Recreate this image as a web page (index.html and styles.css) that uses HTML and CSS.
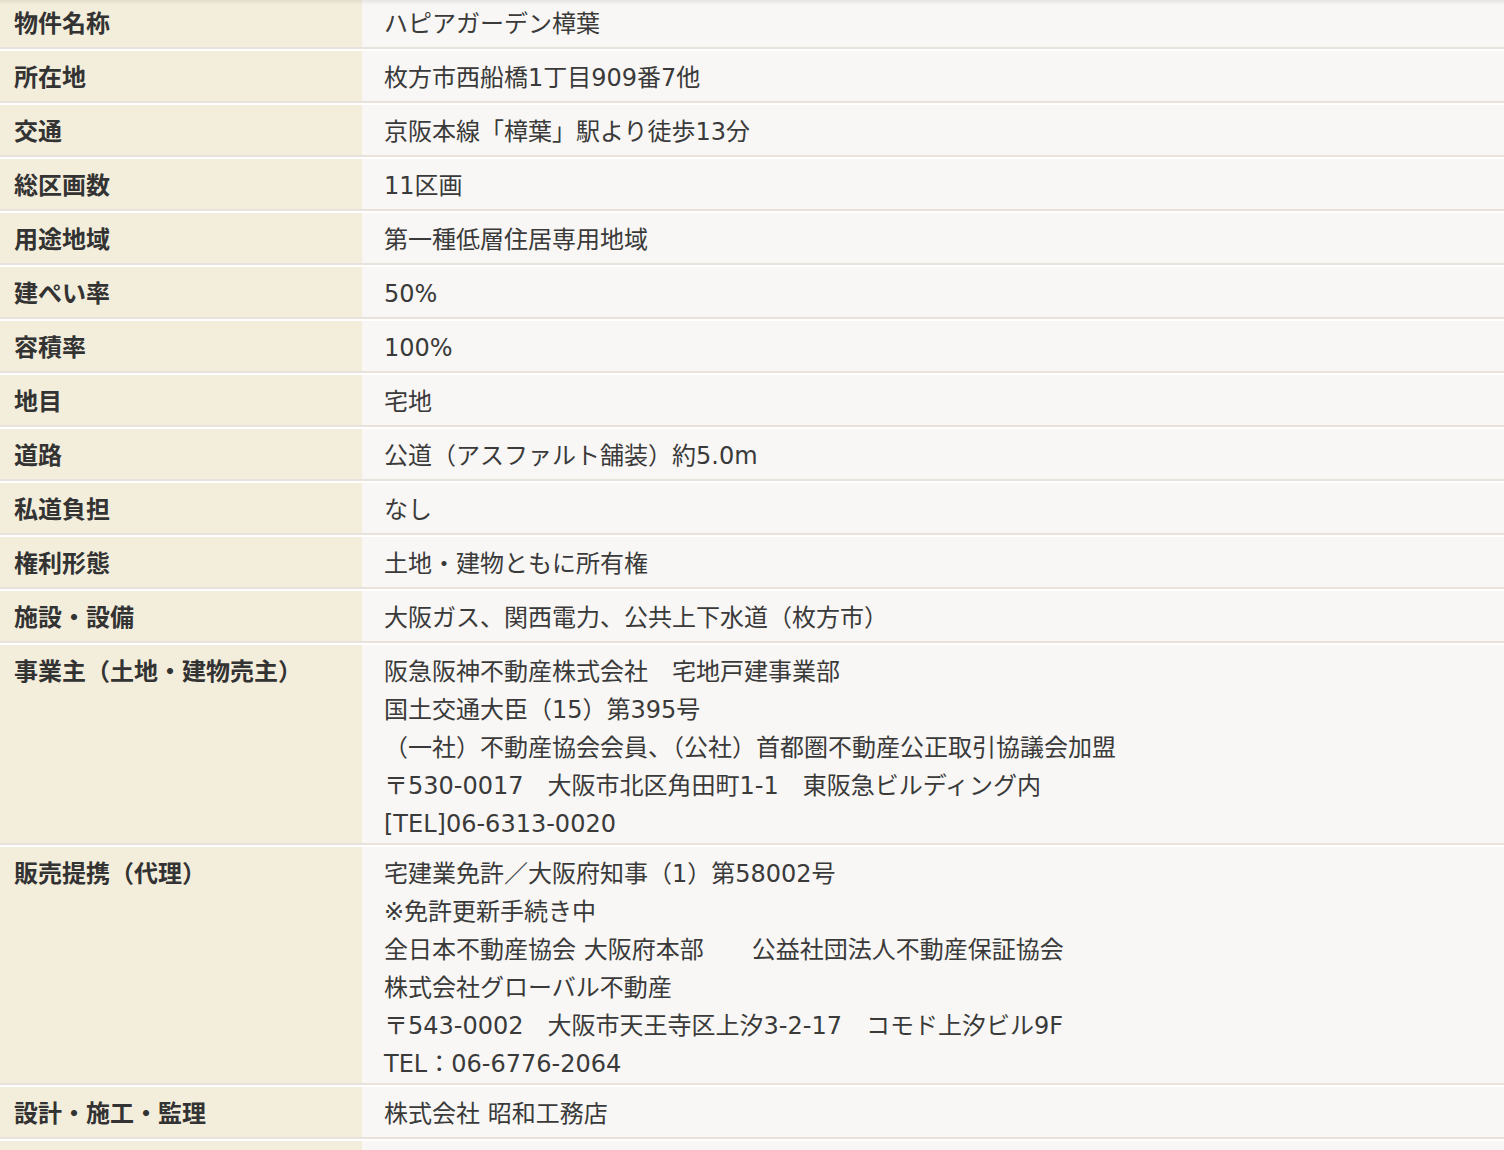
FILE: index.html
```html
<!DOCTYPE html>
<html lang="ja">
<head>
<meta charset="utf-8">
<title>物件概要</title>
<link rel="stylesheet" href="styles.css">
</head>
<body>
<div class="top-shade"></div>
<div class="spec">
  <div class="row"><div class="label">物件名称</div><div class="value">ハピアガーデン樟葉</div></div>
  <div class="row"><div class="label">所在地</div><div class="value">枚方市西船橋1丁目909番7他</div></div>
  <div class="row"><div class="label">交通</div><div class="value">京阪本線「樟葉」駅より徒歩13分</div></div>
  <div class="row"><div class="label">総区画数</div><div class="value">11区画</div></div>
  <div class="row"><div class="label">用途地域</div><div class="value">第一種低層住居専用地域</div></div>
  <div class="row"><div class="label">建ぺい率</div><div class="value">50%</div></div>
  <div class="row"><div class="label">容積率</div><div class="value">100%</div></div>
  <div class="row"><div class="label">地目</div><div class="value">宅地</div></div>
  <div class="row"><div class="label">道路</div><div class="value">公道（アスファルト舗装）約5.0m</div></div>
  <div class="row"><div class="label">私道負担</div><div class="value">なし</div></div>
  <div class="row"><div class="label">権利形態</div><div class="value">土地・建物ともに所有権</div></div>
  <div class="row"><div class="label">施設・設備</div><div class="value">大阪ガス、関西電力、公共上下水道（枚方市）</div></div>
  <div class="row"><div class="label">事業主（土地・建物売主）</div><div class="value multi">阪急阪神不動産株式会社　宅地戸建事業部<br>国土交通大臣（15）第395号<br>（一社）不動産協会会員、（公社）首都圏不動産公正取引協議会加盟<br>〒530-0017　大阪市北区角田町1-1　東阪急ビルディング内<br>[TEL]06-6313-0020</div></div>
  <div class="row"><div class="label">販売提携（代理）</div><div class="value multi">宅建業免許／大阪府知事（1）第58002号<br>※免許更新手続き中<br>全日本不動産協会 大阪府本部　　公益社団法人不動産保証協会<br>株式会社グローバル不動産<br>〒543-0002　大阪市天王寺区上汐3-2-17　コモド上汐ビル9F<br>TEL：06-6776-2064</div></div>
  <div class="row"><div class="label">設計・施工・監理</div><div class="value">株式会社 昭和工務店</div></div>
  <div class="row"><div class="label">&nbsp;</div><div class="value">&nbsp;</div></div>
</div>
</body>
</html>
```

FILE: styles.css
```css
html, body {
  margin: 0;
  padding: 0;
  background: #ffffff;
}
body {
  font-family: "Noto Sans CJK JP", "Noto Sans", sans-serif;
  font-size: 24px;
  color: #333333;
  overflow: hidden;
}
.top-shade {
  position: fixed;
  top: 0;
  left: 0;
  right: 0;
  height: 5px;
  background: linear-gradient(to bottom, rgba(0,0,0,0.07), rgba(0,0,0,0));
  z-index: 2;
  pointer-events: none;
}
.spec {
  display: flex;
  flex-direction: column;
  gap: 2px;
  margin-top: -3px;
}
.row {
  display: grid;
  grid-template-columns: 362px 1fr;
  border-bottom: 2px solid #e9e2db;
}
.label {
  background: #f3eedc;
  padding: 6px 14px 6px;
  line-height: 38px;
  font-weight: bold;
  color: #333333;
}
.value {
  background: #f8f7f5;
  padding: 8px 22px 4px;
  line-height: 38px;
  color: #3a3a3a;
  font-family: "DejaVu Sans", "Noto Sans CJK JP", sans-serif;
}
.value.multi {
  padding-bottom: 0;
}
```
